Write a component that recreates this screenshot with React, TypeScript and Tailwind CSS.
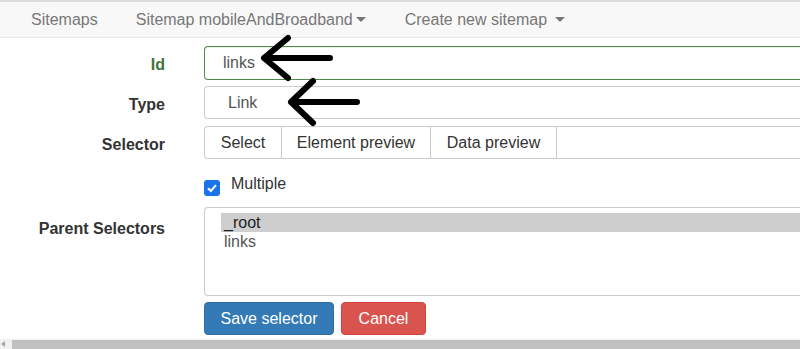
import React from "react";

const navItems = [
  { label: "Sitemaps", caret: false, cls: "ml-[31px]" },
  { label: "Sitemap mobileAndBroadband", caret: true, cls: "ml-[38px]" },
  { label: "Create new sitemap", caret: true, cls: "ml-[39px]", spaced: true },
];

const Caret = () => (
  <span className="inline-block ml-[3px] align-middle border-t-[5px] border-t-[#777] border-x-[5px] border-x-transparent" />
);

const Label = ({ text, success }: { text: string; success?: boolean }) => (
  <div
    className={`w-[165px] shrink-0 text-right font-bold text-[16px] pt-[4px] ${
      success ? "text-[#3c763d]" : "text-[#333]"
    }`}
  >
    {text}
  </div>
);

const App = () => {
  return (
    <div
      className="relative w-[800px] h-[349px] overflow-hidden bg-white text-[16px] text-[#333]"
      style={{ fontFamily: '"Liberation Sans", Arial, sans-serif' }}
    >
      {/* Navbar */}
      <nav className="h-[38px] border-t-2 border-t-[#dcdcdc] border-b border-b-[#e7e7e7] bg-[#f8f8f8] flex items-center text-[#777] text-[16px]">
        {navItems.map((item) => (
          <span key={item.label} className={`${item.cls} flex items-center`}>
            {item.label}
            {item.caret && (
              <span className={item.spaced ? "ml-[5px] flex" : "flex"}>
                <Caret />
              </span>
            )}
          </span>
        ))}
      </nav>

      {/* Form */}
      <div className="flex flex-col">
        {/* Id */}
        <div className="flex items-center mt-[8px]">
          <Label text="Id" success />
          <div className="ml-[39px] flex-1 h-[34px] border border-[#4f8a4a] rounded-l-[4px] border-r-0 flex items-center pl-[18px] text-[#555] shadow-[inset_0_1px_1px_rgba(0,0,0,0.075)]">
            links
          </div>
        </div>

        {/* Type */}
        <div className="flex items-center mt-[6px]">
          <Label text="Type" />
          <div className="ml-[39px] flex-1 h-[33px] border border-[#ccc] rounded-l-[4px] border-r-0 flex items-center pl-[23px] text-[#555]">
            Link
          </div>
        </div>

        {/* Selector */}
        <div className="flex items-center mt-[7px]">
          <Label text="Selector" />
          <div className="ml-[39px] flex-1 h-[33px] flex border border-[#ccc] border-r-0 rounded-l-[4px] text-[#333]">
            <span className="w-[77px] flex items-center justify-center border-r border-[#ccc]">Select</span>
            <span className="w-[149px] flex items-center justify-center border-r border-[#ccc]">Element preview</span>
            <span className="w-[126px] flex items-center justify-center border-r border-[#ccc]">Data preview</span>
            <span className="flex-1" />
          </div>
        </div>

        {/* Multiple */}
        <div className="flex items-center mt-[20px] pl-[204px]">
          <span className="w-[16px] h-[16px] rounded-[3px] bg-[#1a73e8] flex items-center justify-center">
            <svg width="12" height="12" viewBox="0 0 12 12">
              <path d="M2 6.2 L4.8 9 L10 3.2" fill="none" stroke="white" strokeWidth="2" />
            </svg>
          </span>
          <span className="ml-[11px] -mt-[7px]">Multiple</span>
        </div>

        {/* Parent selectors */}
        <div className="flex items-start mt-[11px]">
          <div className="pt-[6px]">
            <Label text="Parent Selectors" />
          </div>
          <div className="ml-[39px] flex-1 h-[89px] border border-[#ccc] border-r-0 rounded-l-[4px] pt-[5px] pl-[16px] leading-[19px]">
            <div className="bg-[#cecece] text-[#222] pl-[3px]">_root</div>
            <div className="text-[#555] pl-[3px]">links</div>
          </div>
        </div>

        {/* Buttons */}
        <div className="flex mt-[6px] pl-[204px] gap-[7px]">
          <button className="w-[130px] h-[33px] rounded-[4px] bg-[#337ab7] border border-[#2e6da4] text-white">
            Save selector
          </button>
          <button className="w-[85px] h-[33px] rounded-[4px] bg-[#d9534f] border border-[#d43f3a] text-white">
            Cancel
          </button>
        </div>
      </div>

      {/* Horizontal scrollbar */}
      <div className="absolute left-0 right-0 bottom-0 h-[10px] bg-[#f1f1f1] flex items-center">
        <span className="ml-[1px] border-r-[4px] border-r-[#a3a3a3] border-y-[3px] border-y-transparent" />
        <span className="ml-[7px] flex-1 h-[9px] bg-[#c1c1c1]" />
      </div>

      {/* Annotation arrows */}
      <svg className="absolute left-0 top-0 pointer-events-none" width="800" height="349">
        <g fill="none" stroke="black" strokeWidth="6" strokeLinecap="round" strokeLinejoin="round">
          <path d="M264 58 H330 M288 38 L264 58 L288 78" />
          <path d="M291 102 H357 M313 81 L291 102 L313 123" />
        </g>
      </svg>
    </div>
  );
};

export default App;
